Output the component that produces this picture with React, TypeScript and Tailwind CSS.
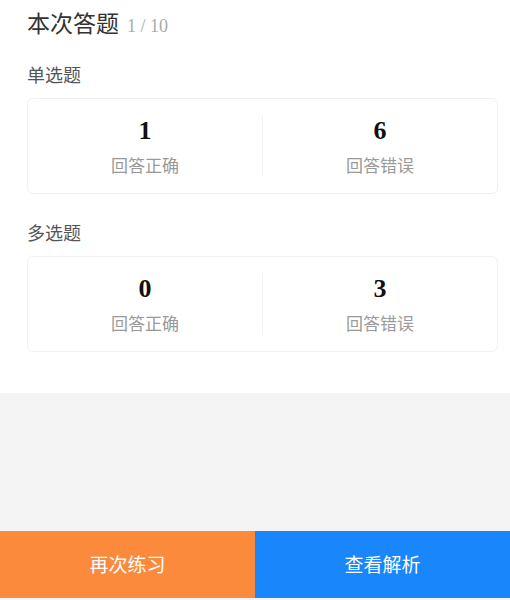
import React from 'react';

interface StatCardProps {
    right: number;
    wrong: number;
}

const StatCard: React.FC<StatCardProps> = ({ right, wrong }) => {
    return (
        <div className="ml-[27px] mr-[12px] h-[96px] rounded-md border border-[#f1f1f1] bg-white flex items-center">
            <div className="flex-1 flex flex-col items-center">
                <div className="text-[26px] leading-[28px] font-bold text-[#111] font-['Liberation_Serif',serif]">{right}</div>
                <div className="mt-[9px] text-[17px] leading-[22px] text-[#9a9a9a]">回答正确</div>
            </div>
            <div className="w-px h-[60px] bg-[#f1f1f1]" />
            <div className="flex-1 flex flex-col items-center">
                <div className="text-[26px] leading-[28px] font-bold text-[#111] font-['Liberation_Serif',serif]">{wrong}</div>
                <div className="mt-[9px] text-[17px] leading-[22px] text-[#9a9a9a]">回答错误</div>
            </div>
        </div>
    );
};

export default function App() {
    return (
        <div className="w-[510px] h-[600px] flex flex-col bg-[#f4f4f4] font-['Noto_Sans_CJK_SC',sans-serif]">
            <div className="bg-white h-[393px] pt-[6px]">
                <div className="px-[27px] flex items-baseline gap-[8px]">
                    <span className="text-[23px] leading-[32px] text-[#333]">本次答题</span>
                    <span className="text-[18px] text-[#aaa] font-['Liberation_Serif',serif]">1 / 10</span>
                </div>
                <div className="px-[27px] mt-[22px] mb-[12px] text-[18px] leading-[24px] text-[#555]">单选题</div>
                <StatCard right={1} wrong={6} />
                <div className="px-[27px] mt-[26px] mb-[12px] text-[18px] leading-[24px] text-[#555]">多选题</div>
                <StatCard right={0} wrong={3} />
            </div>
            <div className="flex-1" />
            <div className="flex h-[67px] mb-[2px]">
                <div className="w-[255px] bg-[#fb8a3c] flex items-center justify-center text-white text-[19px]">再次练习</div>
                <div className="flex-1 bg-[#1a86fb] flex items-center justify-center text-white text-[19px]">查看解析</div>
            </div>
        </div>
    );
}
